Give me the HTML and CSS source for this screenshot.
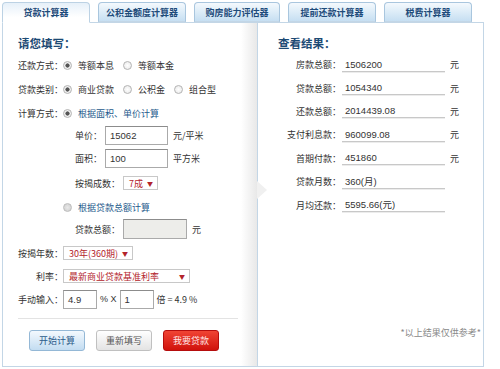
FILE: index.html
```html
<!DOCTYPE html>
<html lang="zh-CN">
<head>
<meta charset="utf-8">
<title>贷款计算器</title>
<link rel="stylesheet" href="styles.css">
</head>
<body>
<div class="page">
  <div class="tabs">
    <div class="tab active">贷款计算器</div>
    <div class="tab">公积金额度计算器</div>
    <div class="tab t3">购房能力评估器</div>
    <div class="tab">提前还款计算器</div>
    <div class="tab">税费计算器</div>
  </div>
  <div class="main">
    <div class="left">
      <div class="title">请您填写：</div>
      <div class="row h24"><span class="lab">还款方式：</span><span class="radio on"></span><span class="opt">等额本息</span><span class="radio"></span><span class="opt">等额本金</span></div>
      <div class="row h24"><span class="lab">贷款类别：</span><span class="radio on"></span><span class="opt">商业贷款</span><span class="radio"></span><span class="opt">公积金</span><span class="radio"></span><span class="opt">组合型</span></div>
      <div class="row h24"><span class="lab">计算方式：</span><span class="radio on"></span><span class="opt link">根据面积、单价计算</span></div>
      <div class="row h21"><span class="sub">单价：</span><span class="inp w63">15062</span><span class="unit">元/平米</span></div>
      <div class="row h25"><span class="sub">面积：</span><span class="inp w63">100</span><span class="unit">平方米</span></div>
      <div class="row h24"><span class="sub wide">按揭成数：</span><span class="sel w35"><span>7成</span><span class="arr">▼</span></span></div>
      <div class="row h24"><span class="radio off ind"></span><span class="opt link">根据贷款总额计算</span></div>
      <div class="row h20"><span class="sub wide">贷款总额：</span><span class="inp w64 dis"></span><span class="unit">元</span></div>
      <div class="row h28"><span class="lab">按揭年数：</span><span class="sel w70"><span>30年(360期)</span><span class="arr">▼</span></span></div>
      <div class="row h18"><span class="lab">利率：</span><span class="sel w127"><span>最新商业贷款基准利率</span><span class="arr">▼</span></span></div>
      <div class="row h28"><span class="lab">手动输入：</span><span class="inp w34">4.9</span><span class="num mid">% X</span><span class="inp w34">1</span><span class="num tail">倍 = 4.9 %</span></div>
      <div class="sep"></div>
      <div class="btns">
        <span class="btn blue">开始计算</span>
        <span class="btn gray">重新填写</span>
        <span class="btn red">我要贷款</span>
      </div>
    </div>
    <div class="right">
      <div class="title rt">查看结果：</div>
      <div class="rrow"><span class="rlab">房款总额：</span><span class="val">1506200</span><span class="unit">元</span></div>
      <div class="rrow"><span class="rlab">贷款总额：</span><span class="val">1054340</span><span class="unit">元</span></div>
      <div class="rrow"><span class="rlab">还款总额：</span><span class="val">2014439.08</span><span class="unit">元</span></div>
      <div class="rrow"><span class="rlab">支付利息款：</span><span class="val">960099.08</span><span class="unit">元</span></div>
      <div class="rrow"><span class="rlab">首期付款：</span><span class="val">451860</span><span class="unit">元</span></div>
      <div class="rrow"><span class="rlab">贷款月数：</span><span class="val">360(月)</span></div>
      <div class="rrow"><span class="rlab">月均还款：</span><span class="val">5595.66(元)</span></div>
      <div class="note">*以上结果仅供参考*</div>
    </div>
  </div>
</div>
</body>
</html>
```
FILE: styles.css
```css
* { box-sizing: border-box; margin: 0; padding: 0; }
body {
  margin: 0;
  background: #fff;
  font-family: "Noto Sans CJK SC", "Liberation Sans", sans-serif;
  font-size: 9px;
  color: #333;
}
.page { width: 500px; height: 369px; padding: 2px 0 0 2px; }

.tabs { display: flex; gap: 8px; height: 20px; align-items: flex-start; position: relative; z-index: 1; }
.tab {
  width: 88px; height: 20px;
  border: 1px solid #a9c6de; border-bottom-color: #c3d6e6;
  border-radius: 4px 4px 0 0;
  background: linear-gradient(#f4f9fd, #c6dff2);
  color: #1e4b7a; font-weight: bold;
  display: flex; align-items: center; justify-content: center;
  line-height: 1;
}
.tab.t3 { width: 86px; }
.tab.active {
  height: 21px;
  background: linear-gradient(#e6f0f9, #fff 75%);
  border-color: #bcd2e4; border-bottom-color: #fff;
}

.main { display: flex; height: 345px; }
.left {
  width: 255px; flex: none;
  border: 1px solid #c3d6e6; border-right: none;
  background: linear-gradient(to right, #fff 238px, #e8e8e8 100%);
  padding: 10px 0 0 15px;
}
.right {
  width: 227px; flex: none;
  border: 1px solid #c3d6e6;
  background: #fff;
  padding-top: 10px;
  position: relative;
  display: flex; flex-direction: column;
}
.right::before {
  content: "";
  position: absolute; left: -1px; top: 158px;
  border-left: 10px solid #f0f0f0;
  border-top: 9px solid transparent;
  border-bottom: 9px solid transparent;
}

.title { height: 20px; line-height: 20px; font-size: 11.5px; font-weight: bold; color: #1c4a74; }
.title.rt { padding-left: 20px; }

.row { display: flex; align-items: center; white-space: nowrap; }
.h18 { height: 18px; } .h20 { height: 20px; } .h21 { height: 21px; }
.h24 { height: 24px; } .h25 { height: 25px; } .h28 { height: 28px; }

.lab { width: 45px; flex: none; text-align: right; }
.sub { margin-left: 57px; width: 30px; flex: none; }
.sub.wide { width: 48px; }

.radio {
  width: 9px; height: 9px; flex: none; border-radius: 50%;
  border: 1px solid #b4b4b4;
  background: radial-gradient(circle, #fff 0, #e6e6e6 100%);
  margin-right: 6px;
}
.radio.on { background: radial-gradient(circle, #555 0 1.8px, #f6f6f6 2.4px, #e0e0e0 100%); }
.radio.off { background: radial-gradient(circle, #e8e8e8 0, #cdcdcd 100%); border-color: #bdbdbd; }
.radio.ind { margin-left: 45px; }
.opt { margin-right: 9px; }
.link { color: #1e5a8c; }

.inp {
  height: 19px; flex: none;
  border: 1px solid #aaa; border-top-color: #8c8c8c;
  background: #fff;
  font-family: "Liberation Sans", sans-serif; font-size: 9.5px; color: #333;
  padding-left: 4px;
  display: flex; align-items: center;
}
.inp.dis { background: #ededea; height: 20px; }
.w63 { width: 63px; } .w64 { width: 64px; } .w34 { width: 34px; }
.unit { margin-left: 5px; }
.num { font-family: "Liberation Sans", "Noto Sans CJK SC", sans-serif; font-size: 9px; }
.num.mid { margin: 0 3px; }
.num.tail { margin-left: 3px; font-family: "Noto Sans CJK SC", sans-serif; }

.sel {
  height: 14px; flex: none;
  border: 1px solid #c8c8c8;
  display: flex; align-items: center; justify-content: space-between;
  padding: 0 4px 0 5px;
  color: #b3232b;
  font-size: 9px;
}
.sel .arr { font-size: 6px; }
.w35 { width: 35px; } .w70 { width: 70px; } .w127 { width: 127px; }

.sep { width: 220px; height: 1px; background: #e3e3e3; margin-top: 5px; }
.btns { display: flex; gap: 11px; margin: 11px 0 0 11px; }
.btn {
  width: 56px; height: 21px; border-radius: 3px;
  display: flex; align-items: center; justify-content: center;
}
.btn.blue { background: linear-gradient(#f3f9fe, #c3dcf1); border: 1px solid #94b8d6; color: #2b5b8a; }
.btn.gray { background: linear-gradient(#fff, #e3e3e3); border: 1px solid #c0c0c0; color: #555; }
.btn.red { background: linear-gradient(#f04434, #d0120c); border: 1px solid #b50d0d; color: #ffe6e6; }

.rrow { display: flex; align-items: center; height: 23.4px; }
.rlab { width: 83px; flex: none; text-align: right; }
.val {
  width: 103px; flex: none; margin-left: 1px;
  height: 14px; line-height: 13px;
  border-bottom: 1px solid #c8c8c8;
  box-shadow: 0 1px 0 #ececec;
  padding-left: 3px;
  font-family: "Liberation Sans", "Noto Sans CJK SC", sans-serif; font-size: 9.5px;
}
.note {
  margin-top: auto; margin-bottom: 27px;
  align-self: flex-end; padding-right: 2px;
  color: #888; line-height: 12px;
}
```
